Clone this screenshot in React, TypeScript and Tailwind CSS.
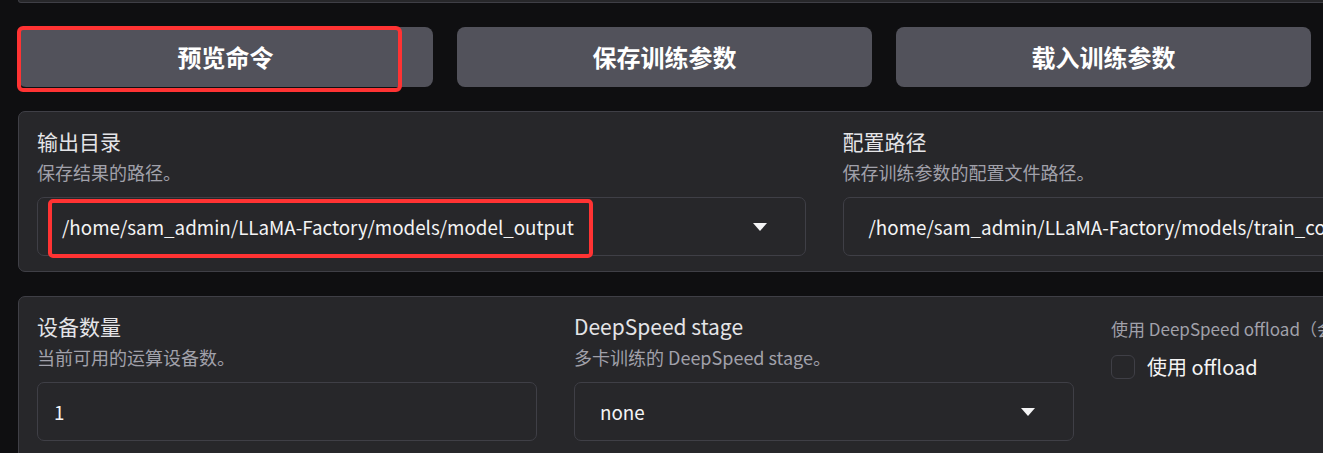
const font = "font-['Noto_Sans_CJK_SC','Noto_Sans',sans-serif]";

function Caret() {
  return (
    <svg width="14" height="8" viewBox="0 0 14 8" className="shrink-0">
      <path d="M0 0 L14 0 L7 8 Z" fill="#f4f4f5" />
    </svg>
  );
}

function FieldHead({ label, info }: { label: string; info: string }) {
  return (
    <div>
      <div className="text-[21px] leading-[29px] text-[#e4e4e7]">{label}</div>
      <div className="mt-[3px] text-[18px] leading-[26px] text-[#a1a1aa]">{info}</div>
    </div>
  );
}

function Dropdown({ value, padLeft, highlight }: { value: string; padLeft: string; highlight?: boolean }) {
  return (
    <div className="relative mt-[12px] flex h-[59px] items-center justify-between rounded-[7px] border border-[#3f3f46] bg-[#27272a] pr-[38px]">
      <span className={`${padLeft} whitespace-nowrap pt-[2px] text-[18.8px] text-[#f4f4f5]`}>{value}</span>
      <Caret />
      {highlight && (
        <div className="absolute left-[10px] top-[1px] h-[59px] w-[545px] rounded-[5px] border-[4px] border-[#ff3333]" />
      )}
    </div>
  );
}

export default function App() {
  return (
    <div className={`${font} h-[453px] w-[1323px] overflow-hidden bg-[#0f0f11]`}>
      <div className="w-[1630px] pl-[18px]">
        <div className="h-[3px] rounded-b-[6px] border-x border-b border-[#3f3f46] bg-[#27272a]" />

        <div className="mt-[24px] grid w-[1293px] grid-cols-3 gap-[24px]">
          {["预览命令", "保存训练参数", "载入训练参数"].map((t, i) => (
            <div key={t} className="relative">
              <button className="flex h-[60px] w-full items-center justify-center rounded-[8px] bg-[#52525b] text-[24px] font-bold text-white">
                {t}
              </button>
              {i === 0 && (
                <div className="absolute -left-[1px] -top-[1px] h-[66px] w-[385px] rounded-[6px] border-[4px] border-[#ff3333]" />
              )}
            </div>
          ))}
        </div>

        <div className="mt-[24px] rounded-[7px] border border-[#3f3f46] bg-[#27272a] px-[18px] pb-[15px] pt-[15px]">
          <div className="grid grid-cols-2 gap-[37px]">
            <div>
              <FieldHead label="输出目录" info="保存结果的路径。" />
              <Dropdown value="/home/sam_admin/LLaMA-Factory/models/model_output" padLeft="pl-[24px]" highlight />
            </div>
            <div>
              <FieldHead label="配置路径" info="保存训练参数的配置文件路径。" />
              <Dropdown value="/home/sam_admin/LLaMA-Factory/models/train_config.yaml" padLeft="pl-[25px]" />
            </div>
          </div>
        </div>

        <div className="mt-[24px] h-[200px] rounded-[7px] border border-[#3f3f46] bg-[#27272a] px-[18px] pt-[15px]">
          <div className="grid grid-cols-3 gap-[37px]">
            <div>
              <FieldHead label="设备数量" info="当前可用的运算设备数。" />
              <div className="mt-[12px] flex h-[59px] items-center rounded-[7px] border border-[#3f3f46] bg-[#27272a] pl-[16px] pt-[2px] text-[18.8px] text-[#f4f4f5]">
                1
              </div>
            </div>
            <div>
              <FieldHead label="DeepSpeed stage" info="多卡训练的 DeepSpeed stage。" />
              <div className="mt-[12px] flex h-[59px] items-center justify-between rounded-[7px] border border-[#3f3f46] bg-[#27272a] pl-[25px] pr-[38px]">
                <span className="pt-[2px] text-[18.8px] text-[#f4f4f5]">none</span>
                <Caret />
              </div>
            </div>
            <div>
              <div className="mt-[5px] whitespace-nowrap text-[17px] leading-[24px] text-[#a1a1aa]">
                使用 DeepSpeed offload（会减慢速度）。
              </div>
              <label className="mt-[11px] flex items-center gap-[12px]">
                <span className="h-[24px] w-[24px] rounded-[6px] border border-[#3f3f46] bg-[#27272a]" />
                <span className="text-[20px] text-[#f4f4f5]">使用 offload</span>
              </label>
            </div>
          </div>
        </div>
      </div>
    </div>
  );
}
